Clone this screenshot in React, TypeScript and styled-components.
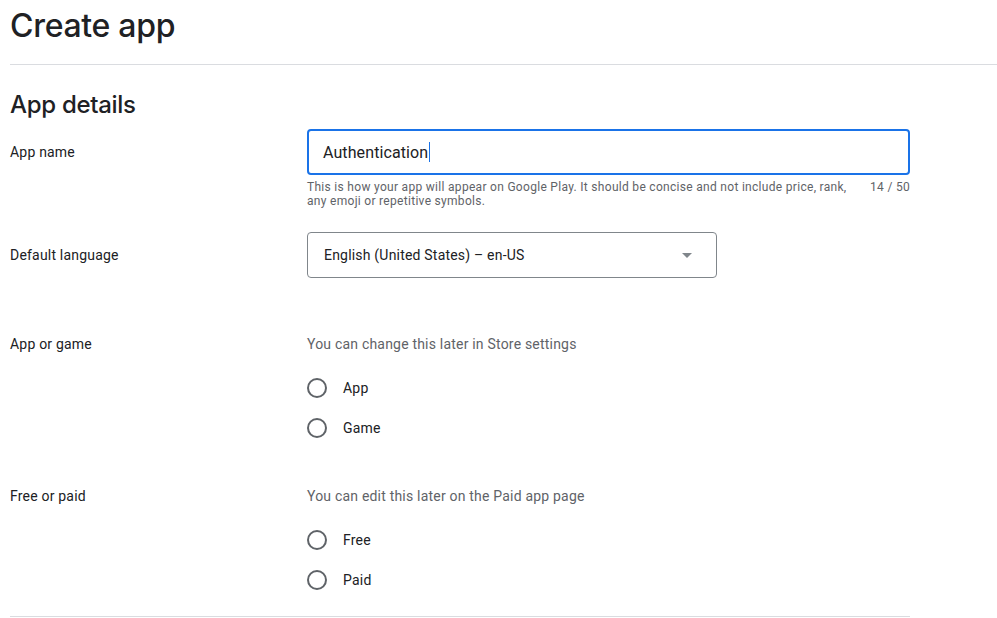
import styled, { createGlobalStyle } from 'styled-components';

const GlobalStyle = createGlobalStyle`
  html, body {
    margin: 0;
    padding: 0;
    background: #ffffff;
  }
  body {
    font-family: Roboto, "Liberation Sans", sans-serif;
    color: #202124;
    letter-spacing: 0.2px;
  }
`;

const Page = styled.div`
  width: 997px;
  height: 618px;
  overflow: hidden;
  padding-left: 10px;
  box-sizing: border-box;
`;

const TitleBar = styled.div`
  height: 65px;
  box-sizing: border-box;
  border-bottom: 1px solid #dadce0;
  display: flex;
  align-items: flex-start;
`;

const Title = styled.h1`
  margin: 6px 0 0;
  font-family: Inter, Roboto, sans-serif;
  font-size: 32px;
  line-height: 40px;
  font-weight: 450;
  letter-spacing: -0.3px;
  color: #202124;
`;

const Form = styled.div`
  width: 900px;
  border-bottom: 1px solid #dadce0;
  padding-bottom: 16px;
`;

const SectionTitle = styled.h2`
  margin: 24px 0 8px;
  font-family: Inter, Roboto, sans-serif;
  font-size: 24px;
  line-height: 32px;
  font-weight: 450;
  letter-spacing: -0.3px;
  color: #202124;
`;

const Row = styled.div<{ gap: number }>`
  display: grid;
  grid-template-columns: 297px 1fr;
  align-items: start;
  margin-bottom: ${({ gap }) => gap}px;
`;

const Label = styled.div<{ top: number }>`
  font-size: 14px;
  line-height: 20px;
  color: #202124;
  padding-top: ${({ top }) => top}px;
`;

const Field = styled.div`
  display: flex;
  flex-direction: column;
`;

const TextBox = styled.div`
  height: 46px;
  box-sizing: border-box;
  border: 2px solid #1a73e8;
  border-radius: 4px;
  padding: 0 14px;
  display: flex;
  align-items: center;
  font-size: 16px;
  letter-spacing: 0.1px;
  color: #202124;
`;

const Caret = styled.span`
  display: inline-block;
  width: 1px;
  height: 20px;
  background: #1a73e8;
  margin-left: 1px;
`;

const HelperRow = styled.div`
  display: flex;
  justify-content: space-between;
  gap: 20px;
  margin-top: 5px;
  font-size: 12px;
  line-height: 14px;
  letter-spacing: 0.3px;
  color: #5f6368;
`;

const HelperText = styled.div`
  max-width: 555px;
`;

const Counter = styled.div`
  white-space: nowrap;
`;

const Select = styled.div`
  width: 410px;
  height: 46px;
  box-sizing: border-box;
  border: 1px solid #80868b;
  border-radius: 4px;
  padding: 0 24px 0 16px;
  display: flex;
  align-items: center;
  justify-content: space-between;
  font-size: 14px;
  color: #202124;
`;

const Arrow = styled.span`
  width: 0;
  height: 0;
  border-left: 5px solid transparent;
  border-right: 5px solid transparent;
  border-top: 5px solid #80868b;
`;

const Hint = styled.div`
  font-size: 14px;
  line-height: 20px;
  color: #5f6368;
  margin-bottom: 14px;
`;

const Option = styled.label`
  display: flex;
  align-items: center;
  gap: 16px;
  height: 40px;
  font-size: 14px;
  color: #202124;
`;

const Radio = styled.span`
  width: 20px;
  height: 20px;
  box-sizing: border-box;
  border: 2px solid #5f6368;
  border-radius: 50%;
`;

interface ChoiceProps {
  label: string;
  hint: string;
  options: string[];
  gap: number;
}

const ChoiceRow = ({ label, hint, options, gap }: ChoiceProps) => (
  <Row gap={gap}>
    <Label top={0}>{label}</Label>
    <Field>
      <Hint>{hint}</Hint>
      {options.map((o) => (
        <Option key={o}>
          <Radio />
          {o}
        </Option>
      ))}
    </Field>
  </Row>
);

const App = () => (
  <Page>
    <GlobalStyle />
    <TitleBar>
      <Title>Create app</Title>
    </TitleBar>
    <Form>
      <SectionTitle>App details</SectionTitle>
      <Row gap={24}>
        <Label top={13}>App name</Label>
        <Field>
          <TextBox>
            Authentication
            <Caret />
          </TextBox>
          <HelperRow>
            <HelperText>
              This is how your app will appear on Google Play. It should be concise and not include price, rank,
              any emoji or repetitive symbols.
            </HelperText>
            <Counter>14 / 50</Counter>
          </HelperRow>
        </Field>
      </Row>
      <Row gap={56}>
        <Label top={13}>Default language</Label>
        <Select>
          English (United States) – en-US
          <Arrow />
        </Select>
      </Row>
      <ChoiceRow
        label="App or game"
        hint="You can change this later in Store settings"
        options={['App', 'Game']}
        gap={38}
      />
      <ChoiceRow
        label="Free or paid"
        hint="You can edit this later on the Paid app page"
        options={['Free', 'Paid']}
        gap={0}
      />
    </Form>
  </Page>
);

export default App;
